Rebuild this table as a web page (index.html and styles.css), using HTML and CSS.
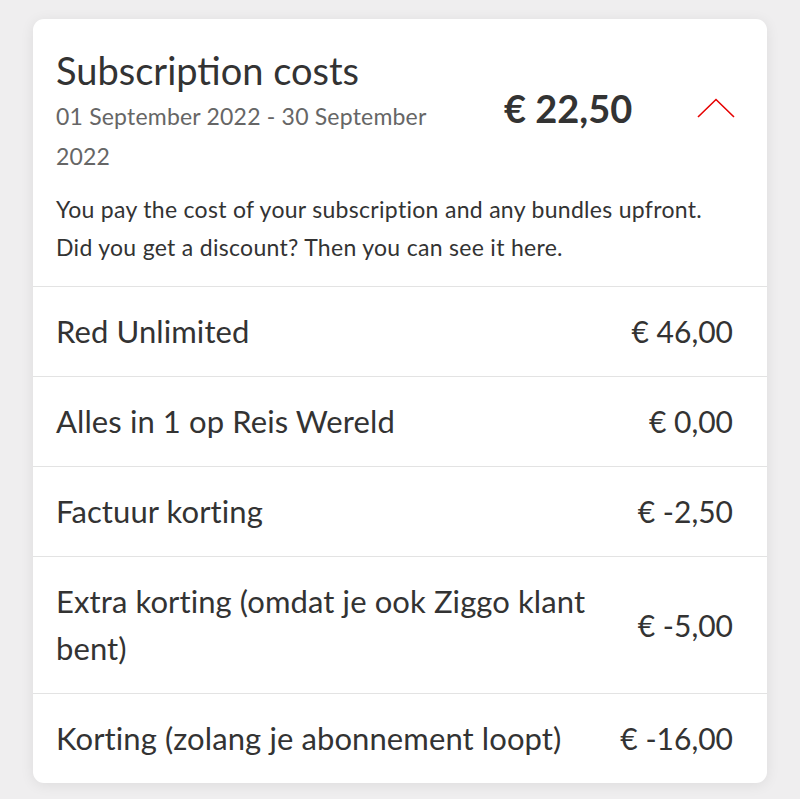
FILE: index.html
```html
<!DOCTYPE html>
<html lang="en">
<head>
<meta charset="utf-8">
<title>Subscription costs</title>
<link rel="stylesheet" href="styles.css">
</head>
<body>
<section class="card">
  <div class="head">
    <div class="head-main">
      <div class="head-text">
        <h2 class="title">Subscription costs</h2>
        <p class="period">01 September 2022 - 30 September 2022</p>
      </div>
      <div class="total">€ 22,50</div>
      <svg class="chevron" width="38" height="20" viewBox="0 0 38 20" aria-hidden="true">
        <polyline points="1,19 19,1.5 37,19" fill="none" stroke="#e60000" stroke-width="1.6"/>
      </svg>
    </div>
    <p class="intro">You pay the cost of your subscription and any bundles upfront. Did you get a discount? Then you can see it here.</p>
  </div>
  <ul class="lines">
    <li class="line"><span class="label">Red Unlimited</span><span class="amount">€ 46,00</span></li>
    <li class="line"><span class="label">Alles in 1 op Reis Wereld</span><span class="amount">€ 0,00</span></li>
    <li class="line"><span class="label">Factuur korting</span><span class="amount">€ -2,50</span></li>
    <li class="line"><span class="label">Extra korting (omdat je ook Ziggo klant bent)</span><span class="amount">€ -5,00</span></li>
    <li class="line"><span class="label">Korting (zolang je abonnement loopt)</span><span class="amount">€ -16,00</span></li>
  </ul>
</section>
</body>
</html>
```

FILE: styles.css
```css
html, body {
  margin: 0;
  padding: 0;
}
body {
  background: #efeeef;
  font-family: "Lato", "Open Sans", sans-serif;
  color: #333;
  padding: 19px 33px 16px 33px;
}
.card {
  background: #fff;
  border-radius: 11px;
  box-shadow: 0 2px 14px rgba(0, 0, 0, 0.08);
  overflow: hidden;
}
.head {
  padding: 28px 32px 20px 23px;
  border-bottom: 1px solid #e3e3e3;
}
.head-main {
  display: flex;
  align-items: center;
}
.head-text {
  width: 410px;
}
.title {
  margin: 0;
  font-size: 38px;
  font-weight: 400;
  line-height: 46px;
  color: #333;
}
.period {
  margin: 3px 0 0 0;
  font-size: 23px;
  letter-spacing: 0.2px;
  line-height: 40px;
  color: #666;
}
.total {
  margin-left: 38px;
  font-size: 38px;
  font-weight: 700;
  line-height: 44px;
  color: #333;
  margin-top: -8px;
}
.chevron {
  margin-left: auto;
  margin-top: -8px;
}
.intro {
  margin: 14px 0 0 0;
  max-width: 665px;
  font-size: 23px;
  letter-spacing: 0.3px;
  line-height: 38px;
  color: #333;
}
.lines {
  list-style: none;
  margin: 0;
  padding: 0;
}
.line {
  display: flex;
  align-items: center;
  padding: 21px 34px 21px 23px;
  border-bottom: 1px solid #e3e3e3;
  font-size: 31px;
  letter-spacing: 0.1px;
  line-height: 47px;
}
.line:last-child {
  border-bottom: none;
}
.label {
  flex: 1;
}
.amount {
  margin-left: 24px;
  white-space: nowrap;
  font-size: 30px;
  letter-spacing: 0;
}
```
